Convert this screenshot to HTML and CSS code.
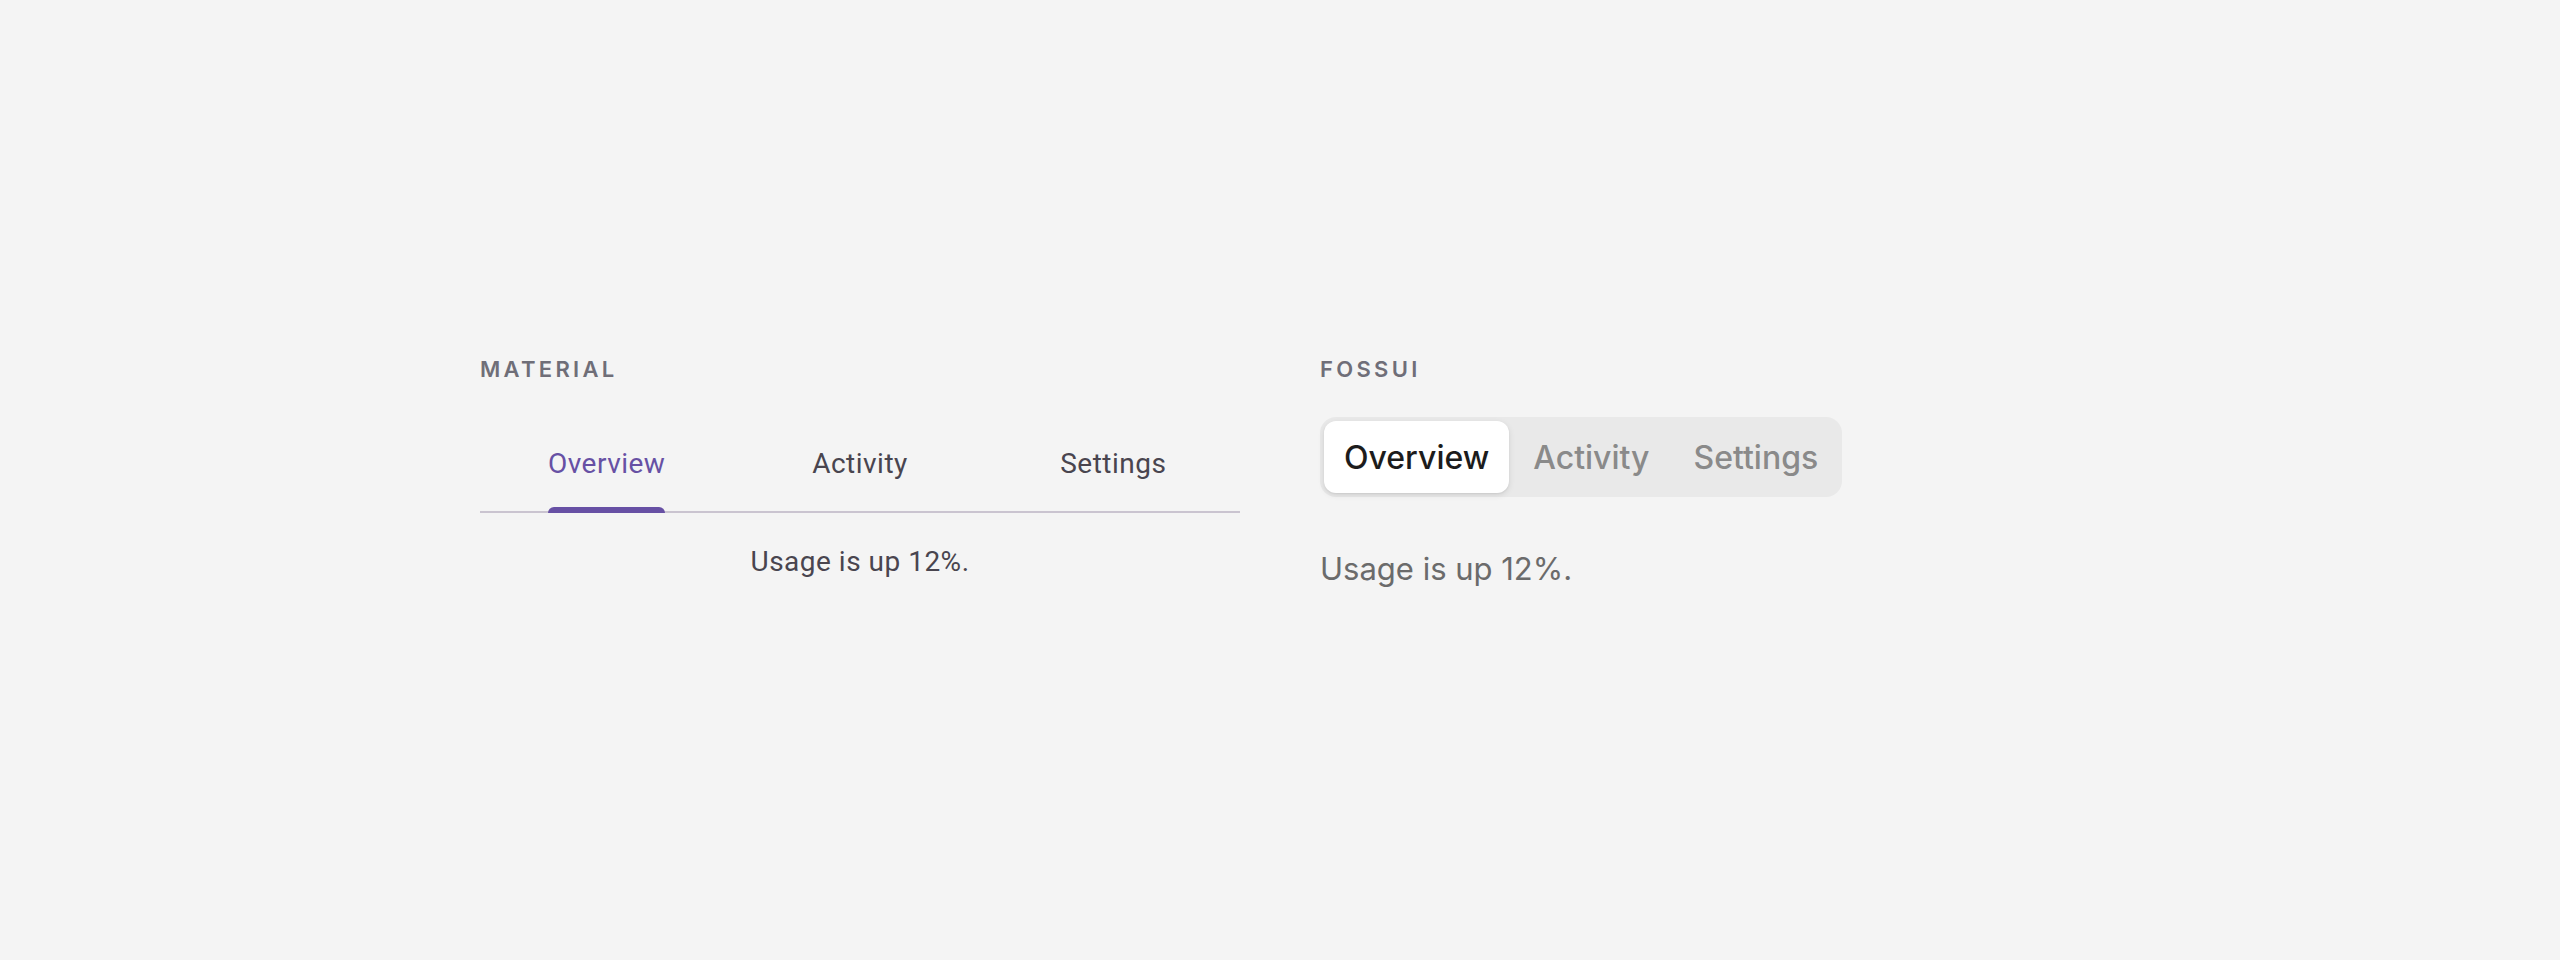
FILE: index.html
```html
<!DOCTYPE html>
<html lang="en">
<head>
	<meta charset="UTF-8">
	<meta name="viewport" content="width=device-width, initial-scale=1.0">
	<title>Tabs</title>
	<link rel="stylesheet" href="styles.css">
</head>
<body>
	<div class="stage">
		<section class="demo">
			<div class="demo-label">MATERIAL</div>
			<div class="md-tabs">
				<button class="md-tab active"><span class="md-tab-inner"><span class="md-tab-text">Overview</span><span class="md-indicator"></span></span></button>
				<button class="md-tab"><span class="md-tab-inner"><span class="md-tab-text">Activity</span><span class="md-indicator"></span></span></button>
				<button class="md-tab"><span class="md-tab-inner"><span class="md-tab-text">Settings</span><span class="md-indicator"></span></span></button>
			</div>
			<p class="md-panel">Usage is up 12%.</p>
		</section>

		<section class="demo">
			<div class="demo-label">FOSSUI</div>
			<div class="fu-tabs">
				<button class="fu-tab active">Overview</button>
				<button class="fu-tab">Activity</button>
				<button class="fu-tab">Settings</button>
			</div>
			<p class="fu-panel">Usage is up 12%.</p>
		</section>
	</div>
</body>
</html>
```

FILE: styles.css
```css
html, body {
	margin: 0;
	background: #f4f4f4;
}
.stage {
	display: grid;
	grid-template-columns: 760px 760px;
	column-gap: 80px;
	justify-content: center;
	padding-top: 356px;
}
.demo {
	display: flex;
	flex-direction: column;
}
.demo-label {
	font-family: Inter, "Noto Sans", sans-serif;
	font-size: 22px;
	font-weight: 600;
	line-height: 26px;
	letter-spacing: 0.15em;
	color: #6f6e78;
	margin-bottom: 35px;
}

/* material tabs */
.md-tabs {
	display: flex;
	height: 96px;
	box-shadow: inset 0 -2px 0 #cac4d0;
}
.md-tab {
	flex: 1;
	display: flex;
	justify-content: center;
	padding: 0;
	border: 0;
	background: none;
	font-family: Roboto, "Liberation Sans", sans-serif;
	font-size: 28px;
	letter-spacing: 0.5px;
	color: #49454f;
	cursor: pointer;
}
.md-tab-inner {
	display: flex;
	flex-direction: column;
	height: 100%;
}
.md-tab-text {
	flex: 1;
	display: flex;
	align-items: center;
	padding-top: 3px;
}
.md-indicator {
	height: 6px;
	border-radius: 6px 6px 0 0;
}
.md-tab.active { color: #6750a4; }
.md-tab.active .md-indicator { background: #6750a4; }
.md-panel {
	margin: 28px 0 0;
	font-family: Roboto, "Liberation Sans", sans-serif;
	font-size: 28px;
	line-height: 1.5;
	letter-spacing: 0.5px;
	color: #49454f;
	text-align: center;
}

/* fossui segmented tabs */
.fu-tabs {
	display: flex;
	gap: 4px;
	align-self: flex-start;
	padding: 4px;
	background: #e9e9e9;
	border-radius: 16px;
}
.fu-tab {
	height: 72px;
	padding: 0 20px;
	border: 0;
	border-radius: 12px;
	background: none;
	font-family: Inter, "Noto Sans", sans-serif;
	font-size: 32px;
	font-weight: 500;
	color: #8a8a8a;
	cursor: pointer;
}
.fu-tab.active {
	background: #fff;
	color: #1c1c1c;
	box-shadow: 0 2px 6px rgba(0, 0, 0, 0.1), 0 1px 2px rgba(0, 0, 0, 0.06);
}
.fu-panel {
	margin: 49px 0 0;
	font-family: Inter, "Noto Sans", sans-serif;
	font-size: 31px;
	line-height: 1.5;
	color: #6b6b6b;
}
```
